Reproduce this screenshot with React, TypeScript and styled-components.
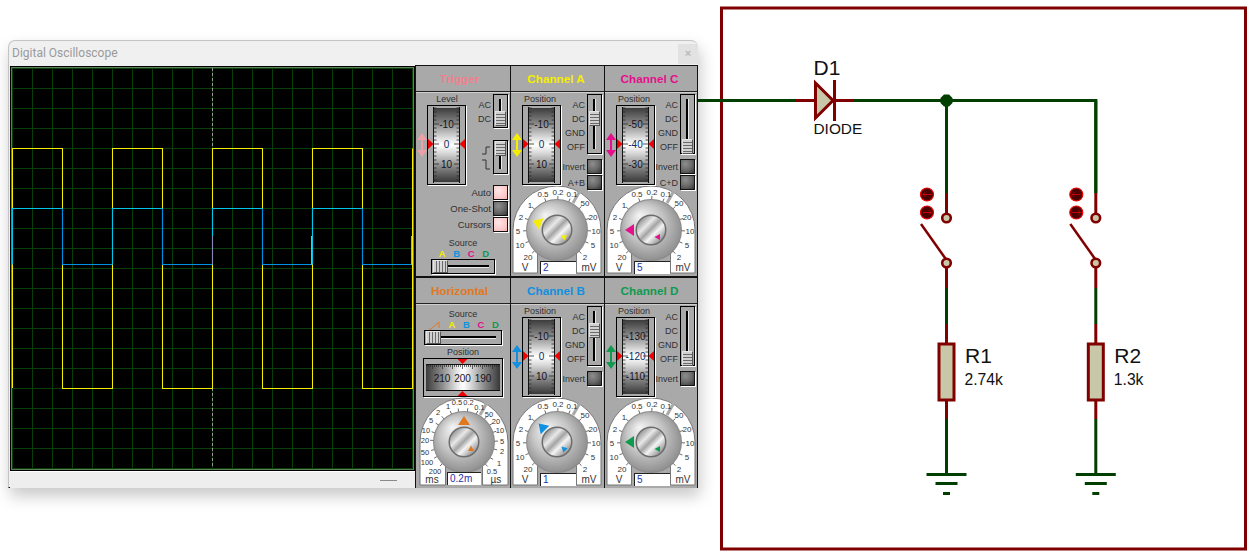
import React from "react";
import styled, { createGlobalStyle } from "styled-components";

const Global = createGlobalStyle`
  html, body { margin: 0; padding: 0; background: #fff; overflow: hidden; }
  body { font-family: "Liberation Sans", Arial, sans-serif; }
`;

const PANEL = "#a9a9a9";
const INK = "#303030";

const Page = styled.div`
  display: flex;
  width: 1252px;
  height: 553px;
  background: #fff;
`;
const ScopeSlot = styled.div`
  padding: 40px 0 0 8px;
  flex: none;
`;
const ScopeWindow = styled.div`
  width: 690px;
  height: 448px;
  box-sizing: border-box;
  border: 1px solid #c4c4c4;
  border-bottom: 1px solid #000;
  border-right: none;
  border-radius: 7px 7px 0 0;
  background: #f0f0f0;
  box-shadow: 2px 8px 16px rgba(0, 0, 0, 0.22);
  display: grid;
  grid-template-columns: 406px 283px;
  grid-template-rows: 25px 1fr;
`;
const TitleBar = styled.div`
  grid-column: 1 / 3;
  display: flex;
  align-items: center;
  justify-content: space-between;
  padding-left: 3px;
  height: 24px;
  font: 12px Roboto, sans-serif;
  color: #9a9a9a;
`;
const CloseBox = styled.div`
  width: 20px;
  height: 20px;
  margin-top: 2px;
  background: #e2e2e2;
  color: #b8b8b8;
  font: bold 11px/19px "Liberation Sans", sans-serif;
  text-align: center;
`;
const LeftColumn = styled.div`
  display: flex;
  flex-direction: column;
`;
const ScreenFrame = styled.div`
  margin-left: 1px;
  width: 405px;
  height: 405px;
  box-sizing: border-box;
  border: 1px solid #000;
  background: #000;
  svg { display: block; }
`;
const StatusBar = styled.div`
  flex: 1;
  margin-left: 1px;
  display: flex;
  justify-content: flex-end;
  align-items: center;
  padding-right: 18px;
  background: #eeeeee;
  border-top: 1px solid #fff;
`;
const StatusDash = styled.div`
  width: 17px;
  height: 1px;
  background: #8a8a8a;
`;
const Panels = styled.div`
  margin-top: -1px;
  background: #111;
  display: grid;
  grid-template-columns: 94px 93px 92px;
  grid-template-rows: 210px 210px;
  column-gap: 1px;
  row-gap: 2px;
  padding: 1px 1px 0 1px;
`;
const Panel = styled.section`
  background: ${PANEL};
  display: flex;
  flex-direction: column;
  min-width: 0;
`;
const PanelHeader = styled.h2<{ $color: string; $shift: number }>`
  margin: 0;
  height: 26px;
  flex: none;
  box-sizing: border-box;
  border-bottom: 1px solid #222;
  padding-right: ${(p) => p.$shift}px;
  color: ${(p) => p.$color};
  font: bold 11.7px/26px "Liberation Sans", sans-serif;
  text-align: center;
`;
const PanelBody = styled.div`
  flex: 1;
  display: flex;
  flex-direction: column;
  border-top: 1px solid #cfcfcf;
  height: 183px;
`;
const TopRow = styled.div<{ $h: number }>`
  display: flex;
  height: ${(p) => p.$h}px;
  flex: none;
`;
const RollerColumn = styled.div`
  width: 50px;
  flex: none;
  padding-left: 1px;
  box-sizing: border-box;
`;
const Caption = styled.div`
  font-size: 9px;
  line-height: 11px;
  color: ${INK};
  text-align: center;
  white-space: nowrap;
`;
const RollerCaption = styled(Caption)<{ $inset: number }>`
  padding: 1px 0 0 ${(p) => p.$inset}px;
  margin-right: -1px;
`;
const RollerRow = styled.div`
  display: flex;
  align-items: center;
`;
const RollerFrame = styled.div`
  width: 39px;
  height: 80px;
  flex: none;
  box-sizing: border-box;
  border: 1px solid #000;
  box-shadow: 1px 1px 0 #fff;
  svg { display: block; }
`;
const RightColumn = styled.div`
  flex: 1;
  display: flex;
  flex-direction: column;
  align-items: flex-end;
  padding: 1px 2px 0 0;
  box-sizing: border-box;
`;
const SwitchRow = styled.div`
  display: flex;
  justify-content: flex-end;
  gap: 2px;
`;
const ModeList = styled.div`
  padding-top: 4px;
  text-align: right;
  font-size: 9px;
  line-height: 14px;
  color: ${INK};
`;
const VSwitch = styled.div<{ $h: number }>`
  position: relative;
  width: 15px;
  height: ${(p) => p.$h}px;
  box-sizing: border-box;
  border: 1px solid #000;
  box-shadow: 1px 1px 0 #fff;
  background: ${PANEL};
  &::before {
    content: "";
    position: absolute;
    left: 5px;
    top: 4px;
    bottom: 4px;
    width: 2px;
    background: #000;
    box-shadow: 1px 0 0 #e8e8e8;
  }
`;
const VThumb = styled.div<{ $top: number }>`
  position: absolute;
  left: 1px;
  top: ${(p) => p.$top}px;
  width: 11px;
  height: 15px;
  box-sizing: border-box;
  border: 1px solid #555;
  border-top-color: #e4e4e4;
  border-left-color: #e4e4e4;
  background: repeating-linear-gradient(180deg, #d0d0d0 0 2px, #6a6a6a 2px 3px);
`;
const HSwitch = styled.div<{ $w: number }>`
  position: relative;
  width: ${(p) => p.$w}px;
  height: 15px;
  box-sizing: border-box;
  border: 1px solid #000;
  box-shadow: 1px 1px 0 #fff;
  background: ${PANEL};
  flex: none;
  &::before {
    content: "";
    position: absolute;
    left: 6px;
    right: 5px;
    top: 5px;
    height: 2px;
    background: #000;
    box-shadow: 0 1px 0 #e8e8e8;
  }
`;
const HThumb = styled.div`
  position: absolute;
  left: 1px;
  top: 0;
  width: 15px;
  height: 13px;
  box-sizing: border-box;
  border: 1px solid #555;
  border-top-color: #e4e4e4;
  border-left-color: #e4e4e4;
  background: repeating-linear-gradient(90deg, #d0d0d0 0 2px, #6a6a6a 2px 3px);
`;
const EdgeRow = styled.div`
  display: flex;
  align-items: center;
  gap: 3px;
  margin-top: 12px;
`;
const ButtonStack = styled.div<{ $top: number }>`
  display: flex;
  flex-direction: column;
  gap: 1px;
  margin-top: ${(p) => p.$top}px;
  align-items: flex-end;
`;
const ButtonRow = styled.div<{ $size: number }>`
  display: flex;
  align-items: center;
  gap: 2px;
  font-size: ${(p) => p.$size}px;
  color: ${INK};
  height: 15px;
  white-space: nowrap;
`;
const SquareButton = styled.div<{ $lit?: boolean }>`
  width: 15px;
  height: 15px;
  box-sizing: border-box;
  border: 1px solid #111;
  box-shadow: 1px 1px 0 #fff;
  background: ${(p) =>
    p.$lit
      ? "radial-gradient(circle at 35% 35%, #ffe6e6 0%, #fcc8c8 65%, #f4b0b0 100%)"
      : "radial-gradient(circle at 35% 30%, #8e8e8e 0%, #6a6a6a 50%, #333 100%)"};
`;
const TriggerButtons = styled(ButtonStack)`
  padding-right: 2px;
`;
const SourceBlock = styled.div<{ $top: number }>`
  display: flex;
  flex-direction: column;
  align-items: center;
  margin-top: ${(p) => p.$top}px;
`;
const Letters = styled.div`
  display: flex;
  align-items: center;
  justify-content: center;
  gap: 7.5px;
  height: 10px;
  font: bold 9.5px/10px "Liberation Sans", sans-serif;
  padding-left: 2px;
`;
const Letter = styled.span<{ $color: string }>`
  display: inline-block;
  width: 7px;
  text-align: center;
  color: ${(p) => p.$color};
`;
const HRollerFrame = styled.div`
  width: 80px;
  height: 39px;
  flex: none;
  box-sizing: border-box;
  border: 1px solid #000;
  box-shadow: 1px 1px 0 #fff;
  svg { display: block; }
`;
const HCaption = styled(Caption)`
  margin-top: 2px;
`;
const DialBox = styled.div<{ $w: number }>`
  position: relative;
  width: ${(p) => p.$w}px;
  height: 90px;
  flex: none;
  svg { display: block; }
`;
const Readout = styled.div<{ $left: number; $top: number; $w: number }>`
  position: absolute;
  left: ${(p) => p.$left}px;
  top: ${(p) => p.$top}px;
  width: ${(p) => p.$w}px;
  height: 13px;
  box-sizing: border-box;
  background: #fff;
  border-top: 1px solid #222;
  border-left: 1px solid #222;
  padding-left: 2px;
  font-size: 10px;
  line-height: 12px;
  color: #2233a8;
`;
const Schematic = styled.svg`
  display: block;
  flex: none;
  text { font-family: "Liberation Sans", Arial, sans-serif; fill: #111; }
`;

/* ---------- drawings ---------- */

const WIRE = "#003f00";
const PIN = "#800000";
const BODY = "#c8c8a8";
const TRACE = 1.05;

const Scope = () => {
  const xs = Array.from({ length: 21 }, (_, i) => 12 + i * 20);
  const ys = Array.from({ length: 21 }, (_, i) => 68 + i * 20);
  const highs = [
    [12, 62],
    [112, 162],
    [212, 262],
    [312, 362],
  ];
  return (
    <svg width={403} height={403} viewBox="11 67 403 403">
      <rect x={11} y={67} width={403} height={403} fill="#000" />
      {xs.map((x) => (
        <line key={x} x1={x + 0.5} x2={x + 0.5} y1={68} y2={469} stroke="#084008" strokeWidth={1} />
      ))}
      {ys.map((y) => (
        <line key={y} y1={y + 0.5} y2={y + 0.5} x1={12} x2={413} stroke="#084008" strokeWidth={1} />
      ))}
      <rect x={11.5} y={67.5} width={402} height={402} fill="none" stroke="#5f7f5f" />
      <line x1={212.5} x2={212.5} y1={68} y2={468} stroke="#9a9a9a" strokeDasharray="3 2" />
      <path
        d="M12.5 388V148.5H62.5V388.5H112.5V148.5H162.5V388.5H212.5V148.5H262.5V388.5H312.5V148.5H362.5V388.5H412.5V148.5"
        fill="none"
        stroke="#f5ef00"
        strokeWidth={TRACE}
      />
      <line x1={311.5} x2={311.5} y1={236} y2={265} stroke="#c8b800" strokeWidth={TRACE} />
      <line x1={411.5} x2={411.5} y1={236} y2={265} stroke="#c8b800" strokeWidth={TRACE} />
      <path
        d="M62.5 208.5V264.5H112.5M162.5 208.5V264.5H212.5M262.5 208.5V264.5H311M362.5 208.5V264.5H411"
        fill="none"
        stroke="#0090e4"
        strokeWidth={TRACE}
      />
      {highs.map(([a, b]) => (
        <path key={a} d={`M${a + 0.5} 264.5V208.5H${b + 0.5}`} fill="none" stroke="#00c4e8" strokeWidth={TRACE} />
      ))}
      <line x1={212.5} x2={212.5} y1={236} y2={264} stroke="#8a8ab4" strokeWidth={TRACE} />
    </svg>
  );
};

const DrumDefs = ({ id, vertical }: { id: string; vertical: boolean }) => (
  <defs>
    <linearGradient id={id} x1="0" y1="0" x2={vertical ? "0" : "1"} y2={vertical ? "1" : "0"}>
      <stop offset="0" stopColor="#3c3c3c" />
      <stop offset="0.22" stopColor="#8c8c8c" />
      <stop offset="0.42" stopColor="#e4e4e4" />
      <stop offset="0.5" stopColor="#ffffff" />
      <stop offset="0.6" stopColor="#dcdcdc" />
      <stop offset="0.8" stopColor="#858585" />
      <stop offset="1" stopColor="#383838" />
    </linearGradient>
  </defs>
);

const Roller = ({ labels }: { labels: [string, string, string] }) => {
  const ticks = Array.from({ length: 19 }, (_, i) => i - 9);
  const cy = 38;
  return (
    <svg width={37} height={78} viewBox="0 0 37 78">
      <DrumDefs id="drumV" vertical />
      <rect x={6} y={2} width={25} height={74} fill="url(#drumV)" />
      <rect x={5} y={1} width={1} height={76} fill="#111" />
      <rect x={31} y={1} width={1} height={76} fill="#111" />
      {ticks.map((t) => {
        const long = t % 5 === 0;
        const y = cy + t * 4;
        return (
          <g key={t} stroke="#2a2a2a" strokeWidth={0.8}>
            <line x1={6} x2={long ? 11 : 8.5} y1={y} y2={y} />
            <line x1={31} x2={long ? 26 : 28.5} y1={y} y2={y} />
          </g>
        );
      })}
      {labels.map((l, i) => (
        <text
          key={l}
          x={18.5}
          y={cy - 20 + i * 20 + 3.5}
          textAnchor="middle"
          fontSize={10}
          fill={i === 1 ? "#0c2c60" : "#14141e"}
          fontFamily="Liberation Sans, sans-serif"
        >
          {l}
        </text>
      ))}
      <polygon points={`0,${cy - 5} 5.5,${cy} 0,${cy + 5}`} fill="#f00000" />
      <polygon points={`37,${cy - 5} 31.5,${cy} 37,${cy + 5}`} fill="#f00000" />
    </svg>
  );
};

const HRoller = () => {
  const ticks = Array.from({ length: 37 }, (_, i) => i - 18);
  const cx = 38.5;
  return (
    <svg width={78} height={37} viewBox="0 0 78 37">
      <DrumDefs id="drumH" vertical={false} />
      <rect x={2} y={6} width={74} height={26} fill="url(#drumH)" />
      <rect x={2} y={5} width={74} height={1} fill="#111" />
      <rect x={2} y={31} width={74} height={1} fill="#111" />
      {ticks.map((t) => {
        const long = t % 5 === 0;
        const x = cx + t * 2;
        return (
          <g key={t} stroke="#2a2a2a" strokeWidth={0.7}>
            <line y1={6} y2={long ? 10 : 8} x1={x} x2={x} />
          </g>
        );
      })}
      {["210", "200", "190"].map((l, i) => (
        <text
          key={l}
          x={cx + (i - 1) * 20.5}
          y={23}
          textAnchor="middle"
          fontSize={10}
          fill="#14141e"
          fontFamily="Liberation Sans, sans-serif"
        >
          {l}
        </text>
      ))}
      <polygon points={`${cx - 5},0 ${cx + 5},0 ${cx},5`} fill="#f00000" />
      <polygon points={`${cx - 5},37 ${cx + 5},37 ${cx},32`} fill="#f00000" />
    </svg>
  );
};

const DoubleArrow = ({ color }: { color: string }) => (
  <svg width={10} height={24} viewBox="0 0 10 24" style={{ flex: "none" }}>
    <polygon points="5,0 10,7 6,7 6,17 10,17 5,24 0,17 4,17 4,7 0,7" fill={color} />
  </svg>
);

const EdgeIcon = () => (
  <svg width={8} height={26} viewBox="0 0 8 26">
    <path d="M0 10H4V3H8M0 16H4V25H8" fill="none" stroke="#333" strokeWidth={1} />
  </svg>
);

const RampIcon = () => (
  <svg width={11} height={9} viewBox="0 0 11 9" style={{ marginRight: 1 }}>
    <path d="M0 8H2L10 1V7" fill="none" stroke="#e07820" strokeWidth={1} />
  </svg>
);

type Mark = [string, number, number];

const CHANNEL_MARKS: Mark[] = [
  ["0.5", -14, -36],
  ["0.2", 1, -38],
  ["0.1", 15, -36],
  ["50", 28, -27],
  ["20", 36, -13],
  ["10", 39, 1],
  ["5", 36, 15],
  ["2", 28, 27],
  ["1", -27, -25],
  ["2", -36, -13],
  ["5", -39, 1],
  ["10", -37, 15],
  ["20", -29, 27],
];
const TIME_MARKS: Mark[] = [
  ["0.5", -7, -40],
  ["0.2", 4.5, -40],
  ["0.1", 15.5, -35],
  ["50", 25, -28],
  ["20", 32, -21],
  ["10", 36, -12],
  ["5", 38, -1],
  ["2", 38, 9],
  ["1", 35, 21],
  ["0.5", 28, 29],
  ["1", -16, -36],
  ["2", -26, -30],
  ["5", -33, -22],
  ["10", -38, -12],
  ["20", -39, -2],
  ["50", -39, 10],
  ["100", -37, 20],
  ["200", -29, 29],
];

const KnobDefs = () => (
  <defs>
    <radialGradient id="knobBody" cx="0.5" cy="0.5" r="0.62" fx="0.3" fy="0.25">
      <stop offset="0" stopColor="#f4f4f4" />
      <stop offset="0.5" stopColor="#c4c4c4" />
      <stop offset="0.85" stopColor="#939393" />
      <stop offset="1" stopColor="#686868" />
    </radialGradient>
    <linearGradient id="knobCap" x1="0.1" y1="0.1" x2="0.9" y2="0.9">
      <stop offset="0" stopColor="#8a8a8a" />
      <stop offset="0.3" stopColor="#e8e8e8" />
      <stop offset="0.48" stopColor="#a4a4a4" />
      <stop offset="0.66" stopColor="#f4f4f4" />
      <stop offset="1" stopColor="#868686" />
    </linearGradient>
  </defs>
);

const Dial = (props: {
  w: number;
  cx: number;
  cy: number;
  marks: Mark[];
  markSize: number;
  color: string;
  angle: number;
  left: string;
  right: string;
  gapA: number;
  gapB: number;
  value: string;
  readoutLeft: number;
  readoutW: number;
}) => {
  const { w, cx, cy, marks, markSize, color, angle, left, right, gapA, gapB, value, readoutLeft, readoutW } = props;
  return (
    <DialBox $w={w}>
      <svg width={w} height={90} viewBox={`0 0 ${w} 90`}>
        <KnobDefs />
        <path
          d={`M${cx - 44} ${cy + 43}V${cy}A44 44 0 0 1 ${cx + 44} ${cy}V${cy + 43}Z`}
          fill="#fff"
          stroke="#777"
          strokeWidth={1}
        />
        <rect x={gapA} y={cy + 20} width={gapB - gapA} height={28} fill={PANEL} />
        <line x1={gapA} x2={gapA} y1={cy + 20} y2={cy + 43} stroke="#777" />
        <line x1={gapB} x2={gapB} y1={cy + 20} y2={cy + 43} stroke="#777" />
        <line x1={cx + 16} y1={cy - 27} x2={cx + 24} y2={cy - 41} stroke={PANEL} strokeWidth={3} />
        {marks.map(([t, dx, dy], i) => {
          const r = Math.hypot(dx, dy);
          const ux = dx / r;
          const uy = dy / r;
          return (
            <g key={i}>
              <line
                x1={cx + ux * 29}
                y1={cy + uy * 29}
                x2={cx + ux * 34}
                y2={cy + uy * 34}
                stroke="#444"
                strokeWidth={0.8}
              />
              <text
                x={cx + dx}
                y={cy + dy + 3}
                textAnchor="middle"
                fontSize={markSize}
                fill="#333"
                fontFamily="Liberation Sans, sans-serif"
              >
                {t}
              </text>
            </g>
          );
        })}
        <text x={cx - 32} y={cy + 41} textAnchor="middle" fontSize={10} fill="#333" fontFamily="Liberation Sans, sans-serif">
          {left}
        </text>
        <text x={cx + 32} y={cy + 41} textAnchor="middle" fontSize={10} fill="#333" fontFamily="Liberation Sans, sans-serif">
          {right}
        </text>
        <circle cx={cx} cy={cy} r={31} fill="#8a8a8a" />
        <circle cx={cx} cy={cy} r={30} fill="url(#knobBody)" />
        <circle cx={cx} cy={cy} r={15.5} fill="#6c6c6c" />
        <circle cx={cx} cy={cy} r={14} fill="url(#knobCap)" />
        <g transform={`translate(${cx} ${cy}) rotate(${angle})`}>
          <polygon points="-26,0 -17,-6 -17,6" fill={color} />
        </g>
        <g transform={`translate(${cx + 7} ${cy + 7}) rotate(${angle})`}>
          <polygon points="-3.5,0 2,-3 2,3" fill={color} />
        </g>
      </svg>
      <Readout $left={readoutLeft} $top={75} $w={readoutW}>
        {value}
      </Readout>
    </DialBox>
  );
};

const YELLOW = "#f6ee00";
const BLUE = "#1090e0";
const MAGENTA = "#e4108c";
const GREEN = "#109a50";
const ORANGE = "#e07820";

const SourceLetters = () => (
  <>
    <Letter $color={YELLOW}>A</Letter>
    <Letter $color={BLUE}>B</Letter>
    <Letter $color={MAGENTA}>C</Letter>
    <Letter $color={GREEN}>D</Letter>
  </>
);

const Channel = (p: {
  title: string;
  color: string;
  labels: [string, string, string];
  thumbTop: number;
  combine?: string;
  angle: number;
  value: string;
}) => (
  <Panel>
    <PanelHeader $color={p.color} $shift={3}>
      {p.title}
    </PanelHeader>
    <PanelBody>
      <TopRow $h={93}>
        <RollerColumn>
          <RollerCaption $inset={6}>Position</RollerCaption>
          <RollerRow>
            <DoubleArrow color={p.color} />
            <RollerFrame>
              <Roller labels={p.labels} />
            </RollerFrame>
          </RollerRow>
        </RollerColumn>
        <RightColumn>
          <SwitchRow>
            <ModeList>
              AC
              <br />
              DC
              <br />
              GND
              <br />
              OFF
            </ModeList>
            <VSwitch $h={60}>
              <VThumb $top={p.thumbTop} />
            </VSwitch>
          </SwitchRow>
          <ButtonStack $top={5}>
            <ButtonRow $size={9}>
              Invert
              <SquareButton />
            </ButtonRow>
            {p.combine && (
              <ButtonRow $size={9}>
                {p.combine}
                <SquareButton />
              </ButtonRow>
            )}
          </ButtonStack>
        </RightColumn>
      </TopRow>
      <Dial
        w={93}
        cx={46}
        cy={44}
        marks={CHANNEL_MARKS}
        markSize={8}
        color={p.color}
        angle={p.angle}
        left="V"
        right="mV"
        gapA={26.5}
        gapB={65.5}
        value={p.value}
        readoutLeft={29}
        readoutW={36}
      />
    </PanelBody>
  </Panel>
);

const Branch = ({ x, r, value }: { x: number; r: string; value: string }) => {
  const led = x - 19.5;
  return (
    <g>
      <g fill="none" strokeWidth={3}>
        <path d={`M${x} 100V193`} stroke={WIRE} />
        <path d={`M${x} 193V213`} stroke={PIN} />
        <path d={`M${x} 268V288`} stroke={PIN} />
        <path d={`M${x} 288V324`} stroke={WIRE} />
        <path d={`M${x} 324V343`} stroke={PIN} />
        <path d={`M${x} 400V419`} stroke={PIN} />
        <path d={`M${x} 419V474`} stroke={WIRE} />
        <path d={`M${x - 25.5} 224L${x} 260`} stroke={PIN} strokeWidth={2.5} />
        <path d={`M${x - 20} 474.5H${x + 20}M${x - 11} 483.5H${x + 11}M${x - 3.5} 493.5H${x + 3.5}`} stroke={WIRE} />
      </g>
      <circle cx={x} cy={218} r={4.3} fill={BODY} stroke={PIN} strokeWidth={2.6} />
      <circle cx={x} cy={263} r={4.3} fill={BODY} stroke={PIN} strokeWidth={2.6} />
      <rect x={x - 7.5} y={344} width={15} height={56} fill={BODY} stroke={PIN} strokeWidth={3} />
      <circle cx={led} cy={194.5} r={6.5} fill="#4a0000" stroke="#f00000" strokeWidth={1.2} />
      <path d={`M${led + 4} 194.5H${led - 4}M${led - 2} 192.5L${led - 4} 194.5L${led - 2} 196.5`} fill="none" stroke="#f00000" strokeWidth={0.8} />
      <circle cx={led} cy={212.5} r={6.5} fill="#4a0000" stroke="#f00000" strokeWidth={1.2} />
      <path d={`M${led - 4} 212.5H${led + 4}M${led + 2} 210.5L${led + 4} 212.5L${led + 2} 214.5`} fill="none" stroke="#f00000" strokeWidth={0.8} />
      <text x={x + 18.5} y={363} fontSize={21}>
        {r}
      </text>
      <text x={x + 18} y={385} fontSize={15.7}>
        {value}
      </text>
    </g>
  );
};

const Circuit = () => (
  <Schematic width={554} height={553} viewBox="698 0 554 553">
    <rect x={721.5} y={8} width={524} height={541} fill="none" stroke={PIN} strokeWidth={3} />
    <path d="M698 100.5H795" stroke={WIRE} strokeWidth={3} fill="none" />
    <path d="M853 100.5H1095.8V193" stroke={WIRE} strokeWidth={3} fill="none" />
    <path d="M795 100.5H815M834 100.5H853" stroke={PIN} strokeWidth={3} fill="none" />
    <polygon points="815.5,83 833,100.5 815.5,118" fill={BODY} stroke={PIN} strokeWidth={3} />
    <path d="M834.5 80V121" stroke={PIN} strokeWidth={3} />
    <polygon points="944,94.5 949,94.5 952.5,98 952.5,103 949,106.5 944,106.5 940.5,103 940.5,98" fill={WIRE} />
    <text x={813.5} y={75} fontSize={21}>
      D1
    </text>
    <text x={813.5} y={134} fontSize={15.4}>
      DIODE
    </text>
    <Branch x={946.5} r="R1" value="2.74k" />
    <Branch x={1095.8} r="R2" value="1.3k" />
  </Schematic>
);

export default function App() {
  return (
    <Page>
      <Global />
      <ScopeSlot>
        <ScopeWindow>
          <TitleBar>
            Digital Oscilloscope
            <CloseBox>×</CloseBox>
          </TitleBar>
          <LeftColumn>
            <ScreenFrame>
              <Scope />
            </ScreenFrame>
            <StatusBar>
              <StatusDash />
            </StatusBar>
          </LeftColumn>
          <Panels>
            <Panel>
              <PanelHeader $color="#f0808e" $shift={7}>
                Trigger
              </PanelHeader>
              <PanelBody>
                <TopRow $h={92}>
                  <RollerColumn>
                    <RollerCaption $inset={10}>Level</RollerCaption>
                    <RollerRow>
                      <DoubleArrow color="#eea0a8" />
                      <RollerFrame>
                        <Roller labels={["-10", "0", "10"]} />
                      </RollerFrame>
                    </RollerRow>
                  </RollerColumn>
                  <RightColumn>
                    <SwitchRow>
                      <ModeList>
                        AC
                        <br />
                        DC
                      </ModeList>
                      <VSwitch $h={34}>
                        <VThumb $top={16} />
                      </VSwitch>
                    </SwitchRow>
                    <EdgeRow>
                      <EdgeIcon />
                      <VSwitch $h={34}>
                        <VThumb $top={0} />
                      </VSwitch>
                    </EdgeRow>
                  </RightColumn>
                </TopRow>
                <TriggerButtons $top={0}>
                  <ButtonRow $size={9.5}>
                    Auto
                    <SquareButton $lit />
                  </ButtonRow>
                  <ButtonRow $size={9.5}>
                    One-Shot
                    <SquareButton />
                  </ButtonRow>
                  <ButtonRow $size={9.5}>
                    Cursors
                    <SquareButton $lit />
                  </ButtonRow>
                </TriggerButtons>
                <SourceBlock $top={6}>
                  <Caption>Source</Caption>
                  <Letters>
                    <SourceLetters />
                  </Letters>
                  <HSwitch $w={64}>
                    <HThumb />
                  </HSwitch>
                </SourceBlock>
              </PanelBody>
            </Panel>
            <Channel title="Channel A" color={YELLOW} labels={["-10", "0", "10"]} thumbTop={16} combine="A+B" angle={21} value="2" />
            <Channel title="Channel C" color={MAGENTA} labels={["-50", "-40", "-30"]} thumbTop={44} combine="C+D" angle={0} value="5" />
            <Panel>
              <PanelHeader $color={ORANGE} $shift={7}>
                Horizontal
              </PanelHeader>
              <PanelBody>
                <SourceBlock $top={4}>
                  <Caption>Source</Caption>
                  <Letters>
                    <RampIcon />
                    <SourceLetters />
                  </Letters>
                  <HSwitch $w={78}>
                    <HThumb />
                  </HSwitch>
                  <HCaption>Position</HCaption>
                  <HRollerFrame>
                    <HRoller />
                  </HRollerFrame>
                </SourceBlock>
                <Dial
                  w={94}
                  cx={48}
                  cy={45}
                  marks={TIME_MARKS}
                  markSize={7.5}
                  color={ORANGE}
                  angle={90}
                  left="ms"
                  right="µs"
                  gapA={29.5}
                  gapB={66.5}
                  value="0.2m"
                  readoutLeft={31}
                  readoutW={34}
                />
              </PanelBody>
            </Panel>
            <Channel title="Channel B" color={BLUE} labels={["-10", "0", "10"]} thumbTop={16} angle={45} value="1" />
            <Channel title="Channel D" color={GREEN} labels={["-130", "-120", "-110"]} thumbTop={44} angle={0} value="5" />
          </Panels>
        </ScopeWindow>
      </ScopeSlot>
      <Circuit />
    </Page>
  );
}
